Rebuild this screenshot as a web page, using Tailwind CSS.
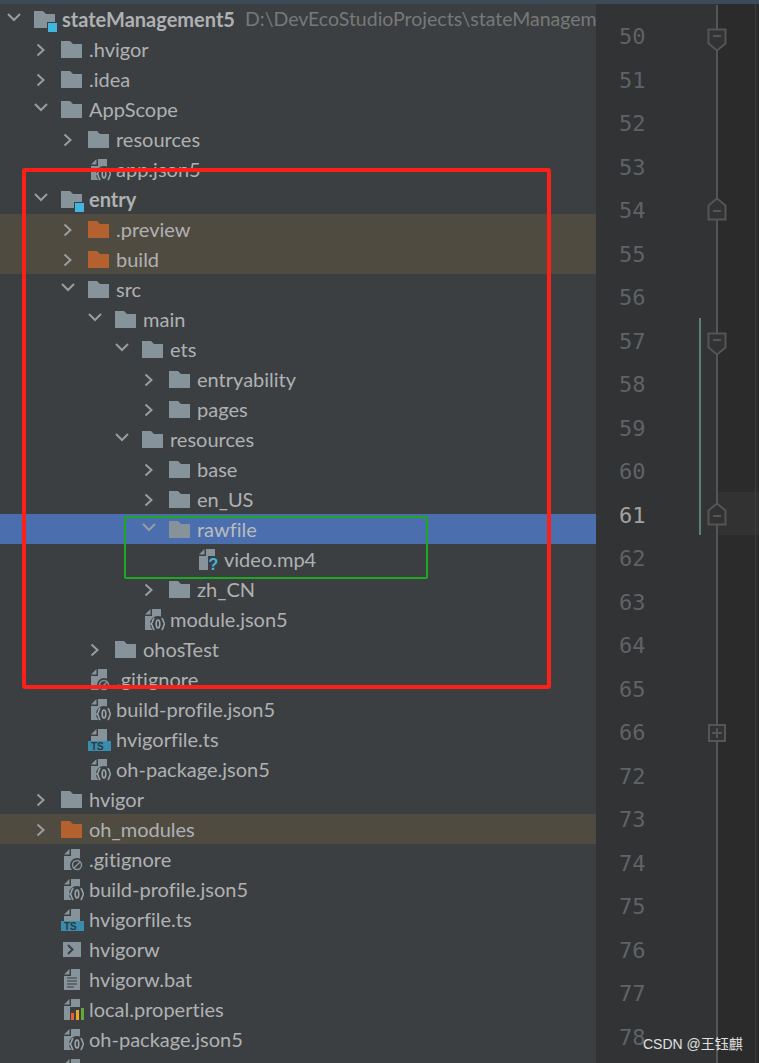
<!DOCTYPE html>
<html lang="en">
<head>
  <meta charset="UTF-8">
  <title>Project tree</title>
  <script src="https://cdn.jsdelivr.net/npm/@tailwindcss/browser@4"></script>
</head>
<body class="bg-[#3c3f41] overflow-hidden">
  <svg class="hidden">
    <symbol id="right" viewBox="0 0 14 14"><path d="M3.500 1.500 9.500 7l-6 5.500" fill="none" stroke="#9a9d9f" stroke-width="2"/></symbol>
    <symbol id="down" viewBox="0 0 14 14"><path d="M1 3l6 6 6-6" fill="none" stroke="#9a9d9f" stroke-width="2"/></symbol>
    <symbol id="folder" viewBox="0 0 22 18"><path d="M0 0h9l3 3h9v14H0z" fill="#87939a"/></symbol>
    <symbol id="folder-o" viewBox="0 0 22 18"><path d="M0 0h9l3 3h9v14H0z" fill="#b4602f"/></symbol>
    <symbol id="module" viewBox="0 0 24 22"><path d="M0 0h9l3 3h9v14H0z" fill="#87939a"/><rect x="13" y="11" width="10" height="10" fill="#3c3f41"/><rect x="14" y="12" width="9" height="9" fill="#40b6e0"/></symbol>
    <symbol id="json" viewBox="0 0 20 22"><path d="M0 5.500 5.500 0v5.500z M7 0h9v21H0V7h7z" fill="#87939a"/><circle cx="13" cy="15" r="8" fill="#3c3f41"/><path d="M9.500 9.500c-2.500 0-1 4.500-3.500 5.500 2.500 1 1 5.500 3.500 5.500M16.500 9.500c2.500 0 1 4.500 3.500 5.500-2.500 1-1 5.500-3.500 5.500" fill="none" stroke="#9aa5ab" stroke-width="1.600"/><ellipse cx="13" cy="15" rx="1.800" ry="4" fill="none" stroke="#9aa5ab" stroke-width="1.600"/></symbol>
    <symbol id="ignore" viewBox="0 0 20 22"><path d="M0 5.500 5.500 0v5.500z M7 0h9v21H0V7h7z" fill="#87939a"/><circle cx="13" cy="16" r="7" fill="#3c3f41"/><circle cx="13" cy="16" r="4.500" fill="none" stroke="#87939a" stroke-width="1.500"/><path d="M10 19l6-6" stroke="#87939a" stroke-width="1.500"/></symbol>
    <symbol id="ts" viewBox="0 0 24 22"><path d="M3 5.500 8.500 0v5.500z M10 0h9v12H3V7h7z" fill="#87939a"/><rect x="0" y="12" width="23" height="10" fill="#3a8cad"/><text x="3" y="20.800" font-family="Liberation Sans" font-size="10" font-weight="700" fill="#2b3a42">TS</text></symbol>
    <symbol id="shell" viewBox="0 0 20 16"><rect width="18" height="15" fill="#87939a"/><path d="M5 3l4.500 4.500L5 12" fill="none" stroke="#3c3f41" stroke-width="2"/></symbol>
    <symbol id="text" viewBox="0 0 20 22"><path d="M0 5.500 5.500 0v5.500z M7 0h9v21H0V7h7z" fill="#87939a"/><path d="M3 9h10M3 12h10M3 15h10M3 18h7" stroke="#3c3f41" stroke-width="1.200"/></symbol>
    <symbol id="props" viewBox="0 0 20 22"><path d="M0 5.500 5.500 0v5.500z M7 0h9v21H0V7h7z" fill="#87939a"/><rect x="6" y="8" width="14" height="14" fill="#3c3f41"/><rect x="7" y="14" width="3" height="7" fill="#e8622c"/><rect x="12" y="11" width="3" height="10" fill="#e9a52d"/><rect x="17" y="9" width="3" height="12" fill="#62a83a"/></symbol>
    <symbol id="unknown" viewBox="0 0 20 22"><path d="M0 5.500 5.500 0v5.500z M7 0h9v21H0V7h7z" fill="#87939a"/><rect x="9" y="7" width="11" height="15" fill="#3c3f41"/><text x="9.500" y="21" font-family="Liberation Sans" font-size="16" font-weight="700" fill="#40b6e0">?</text></symbol>
  </svg>

  <div class="h-[4px] bg-[#3d4a58]"></div>
  <div class="flex h-[1059px] font-['Lato',sans-serif] text-[20px] text-[#afb1b3] [font-variant-ligatures:none]">
    <!-- project tree -->
    <aside class="w-[596px] shrink-0 overflow-hidden whitespace-nowrap [&>div>svg]:translate-y-[1px]">
      <div class="flex items-center h-[30px] pl-[7px]"><svg class="shrink-0 w-[14px] h-[14px] mr-[13px] -mt-[4px]"><use href="#down"/></svg><svg class="shrink-0 w-[24px] h-[22px] mr-[4px] mt-[4px]"><use href="#module"/></svg><b class="font-bold">stateManagement5</b><span class="ml-[10px] text-[19.500px] text-[#787878]">D:\DevEcoStudioProjects\stateManagem</span></div>
      <div class="flex items-center h-[30px] pl-[34px]"><svg class="w-[14px] h-[14px] mr-[13px]"><use href="#right"/></svg><svg class="w-[22px] h-[18px] mr-[6px]"><use href="#folder"/></svg>.hvigor</div>
      <div class="flex items-center h-[30px] pl-[34px]"><svg class="w-[14px] h-[14px] mr-[13px]"><use href="#right"/></svg><svg class="w-[22px] h-[18px] mr-[6px]"><use href="#folder"/></svg>.idea</div>
      <div class="flex items-center h-[30px] pl-[34px]"><svg class="w-[14px] h-[14px] mr-[13px] -mt-[4px]"><use href="#down"/></svg><svg class="w-[22px] h-[18px] mr-[6px]"><use href="#folder"/></svg>AppScope</div>
      <div class="flex items-center h-[30px] pl-[61px]"><svg class="w-[14px] h-[14px] mr-[13px]"><use href="#right"/></svg><svg class="w-[22px] h-[18px] mr-[6px]"><use href="#folder"/></svg>resources</div>
      <div class="flex items-center h-[30px] pl-[91px]"><svg class="w-[20px] h-[22px] mr-[5px]"><use href="#json"/></svg>app.json5</div>
      <div class="flex items-center h-[30px] pl-[34px]"><svg class="w-[14px] h-[14px] mr-[13px] -mt-[4px]"><use href="#down"/></svg><svg class="w-[24px] h-[22px] mr-[4px] mt-[4px]"><use href="#module"/></svg><b class="font-bold">entry</b></div>
      <div class="flex items-center h-[30px] pl-[61px] bg-[#4f4b41]"><svg class="w-[14px] h-[14px] mr-[13px]"><use href="#right"/></svg><svg class="w-[22px] h-[18px] mr-[6px]"><use href="#folder-o"/></svg>.preview</div>
      <div class="flex items-center h-[30px] pl-[61px] bg-[#4f4b41]"><svg class="w-[14px] h-[14px] mr-[13px]"><use href="#right"/></svg><svg class="w-[22px] h-[18px] mr-[6px]"><use href="#folder-o"/></svg>build</div>
      <div class="flex items-center h-[30px] pl-[61px]"><svg class="w-[14px] h-[14px] mr-[13px] -mt-[4px]"><use href="#down"/></svg><svg class="w-[22px] h-[18px] mr-[6px]"><use href="#folder"/></svg>src</div>
      <div class="flex items-center h-[30px] pl-[88px]"><svg class="w-[14px] h-[14px] mr-[13px] -mt-[4px]"><use href="#down"/></svg><svg class="w-[22px] h-[18px] mr-[6px]"><use href="#folder"/></svg>main</div>
      <div class="flex items-center h-[30px] pl-[115px]"><svg class="w-[14px] h-[14px] mr-[13px] -mt-[4px]"><use href="#down"/></svg><svg class="w-[22px] h-[18px] mr-[6px]"><use href="#folder"/></svg>ets</div>
      <div class="flex items-center h-[30px] pl-[142px]"><svg class="w-[14px] h-[14px] mr-[13px]"><use href="#right"/></svg><svg class="w-[22px] h-[18px] mr-[6px]"><use href="#folder"/></svg>entryability</div>
      <div class="flex items-center h-[30px] pl-[142px]"><svg class="w-[14px] h-[14px] mr-[13px]"><use href="#right"/></svg><svg class="w-[22px] h-[18px] mr-[6px]"><use href="#folder"/></svg>pages</div>
      <div class="flex items-center h-[30px] pl-[115px]"><svg class="w-[14px] h-[14px] mr-[13px] -mt-[4px]"><use href="#down"/></svg><svg class="w-[22px] h-[18px] mr-[6px]"><use href="#folder"/></svg>resources</div>
      <div class="flex items-center h-[30px] pl-[142px]"><svg class="w-[14px] h-[14px] mr-[13px]"><use href="#right"/></svg><svg class="w-[22px] h-[18px] mr-[6px]"><use href="#folder"/></svg>base</div>
      <div class="flex items-center h-[30px] pl-[142px]"><svg class="w-[14px] h-[14px] mr-[13px]"><use href="#right"/></svg><svg class="w-[22px] h-[18px] mr-[6px]"><use href="#folder"/></svg>en_US</div>
      <div class="flex items-center h-[30px] pl-[142px] bg-[#4b6eaf] text-[#bbbbbb]"><svg class="w-[14px] h-[14px] mr-[13px] -mt-[4px]"><use href="#down"/></svg><svg class="w-[22px] h-[18px] mr-[6px]"><use href="#folder"/></svg>rawfile</div>
      <div class="flex items-center h-[30px] pl-[199px]"><svg class="w-[20px] h-[22px] mr-[5px]"><use href="#unknown"/></svg>video.mp4</div>
      <div class="flex items-center h-[30px] pl-[142px]"><svg class="w-[14px] h-[14px] mr-[13px]"><use href="#right"/></svg><svg class="w-[22px] h-[18px] mr-[6px]"><use href="#folder"/></svg>zh_CN</div>
      <div class="flex items-center h-[30px] pl-[145px]"><svg class="w-[20px] h-[22px] mr-[5px]"><use href="#json"/></svg>module.json5</div>
      <div class="flex items-center h-[30px] pl-[88px]"><svg class="w-[14px] h-[14px] mr-[13px]"><use href="#right"/></svg><svg class="w-[22px] h-[18px] mr-[6px]"><use href="#folder"/></svg>ohosTest</div>
      <div class="flex items-center h-[30px] pl-[91px]"><svg class="w-[20px] h-[22px] mr-[5px]"><use href="#ignore"/></svg>.gitignore</div>
      <div class="flex items-center h-[30px] pl-[91px]"><svg class="w-[20px] h-[22px] mr-[5px]"><use href="#json"/></svg>build-profile.json5</div>
      <div class="flex items-center h-[30px] pl-[88px]"><svg class="w-[24px] h-[22px] mr-[4px]"><use href="#ts"/></svg>hvigorfile.ts</div>
      <div class="flex items-center h-[30px] pl-[91px]"><svg class="w-[20px] h-[22px] mr-[5px]"><use href="#json"/></svg>oh-package.json5</div>
      <div class="flex items-center h-[30px] pl-[34px]"><svg class="w-[14px] h-[14px] mr-[13px]"><use href="#right"/></svg><svg class="w-[22px] h-[18px] mr-[6px]"><use href="#folder"/></svg>hvigor</div>
      <div class="flex items-center h-[30px] pl-[34px] bg-[#4f4b41]"><svg class="w-[14px] h-[14px] mr-[13px]"><use href="#right"/></svg><svg class="w-[22px] h-[18px] mr-[6px]"><use href="#folder-o"/></svg>oh_modules</div>
      <div class="flex items-center h-[30px] pl-[64px]"><svg class="w-[20px] h-[22px] mr-[5px]"><use href="#ignore"/></svg>.gitignore</div>
      <div class="flex items-center h-[30px] pl-[64px]"><svg class="w-[20px] h-[22px] mr-[5px]"><use href="#json"/></svg>build-profile.json5</div>
      <div class="flex items-center h-[30px] pl-[61px]"><svg class="w-[24px] h-[22px] mr-[4px]"><use href="#ts"/></svg>hvigorfile.ts</div>
      <div class="flex items-center h-[30px] pl-[63px]"><svg class="w-[20px] h-[16px] mr-[6px]"><use href="#shell"/></svg>hvigorw</div>
      <div class="flex items-center h-[30px] pl-[64px]"><svg class="w-[20px] h-[22px] mr-[5px]"><use href="#text"/></svg>hvigorw.bat</div>
      <div class="flex items-center h-[30px] pl-[64px]"><svg class="w-[20px] h-[22px] mr-[5px]"><use href="#props"/></svg>local.properties</div>
      <div class="flex items-center h-[30px] pl-[64px]"><svg class="w-[20px] h-[22px] mr-[5px]"><use href="#json"/></svg>oh-package.json5</div>
      <div class="flex items-center h-[30px] pl-[64px]"><svg class="w-[20px] h-[22px] mr-[5px]"><use href="#json"/></svg></div>
    </aside>

    <!-- line numbers -->
    <div class="relative w-[121px] shrink-0 bg-[#313335] pt-[11px] pl-[23px] font-['DejaVu_Sans_Mono',monospace] text-[22px] text-[#606366]">
      <div class="h-[43.5px] leading-[43.5px]">50</div>
      <div class="h-[43.5px] leading-[43.5px]">51</div>
      <div class="h-[43.5px] leading-[43.5px]">52</div>
      <div class="h-[43.5px] leading-[43.5px]">53</div>
      <div class="h-[43.5px] leading-[43.5px]">54</div>
      <div class="h-[43.5px] leading-[43.5px]">55</div>
      <div class="h-[43.5px] leading-[43.5px]">56</div>
      <div class="h-[43.5px] leading-[43.5px]">57</div>
      <div class="h-[43.5px] leading-[43.5px]">58</div>
      <div class="h-[43.5px] leading-[43.5px]">59</div>
      <div class="h-[43.5px] leading-[43.5px]">60</div>
      <div class="h-[43.5px] leading-[43.5px] text-[#a4a3a3]">61</div>
      <div class="h-[43.5px] leading-[43.5px]">62</div>
      <div class="h-[43.5px] leading-[43.5px]">63</div>
      <div class="h-[43.5px] leading-[43.5px]">64</div>
      <div class="h-[43.5px] leading-[43.5px]">65</div>
      <div class="h-[43.5px] leading-[43.5px]">66</div>
      <div class="h-[43.5px] leading-[43.5px]">72</div>
      <div class="h-[43.5px] leading-[43.5px]">73</div>
      <div class="h-[43.5px] leading-[43.5px]">74</div>
      <div class="h-[43.5px] leading-[43.5px]">75</div>
      <div class="h-[43.5px] leading-[43.5px]">76</div>
      <div class="h-[43.5px] leading-[43.5px]">77</div>
      <div class="h-[43.5px] leading-[43.5px]">78</div>
      <!-- changed-lines marker -->
      <div class="absolute left-[103px] top-[314px] w-[2px] h-[217px] bg-[#5e7f78]"></div>
    </div>

    <!-- code area -->
    <div class="relative flex-1 bg-[#2b2b2b]">
      <div class="absolute left-0 right-0 top-[488px] h-[43px] bg-[#323232]"></div>
      <div class="absolute left-[38px] top-0 bottom-0 w-[1px] bg-[#3d3d3d]"></div>
    </div>
  </div>

  <!-- fold guide and markers -->
  <div class="absolute left-[716px] top-[5px] bottom-0 w-[2px] bg-[#555555]"></div>
  <svg class="absolute left-[707px] top-[28px] w-[20px] h-[24px]" viewBox="0 0 20 24"><path d="M1.500 1.500h17v14l-8.500 7-8.500-7z" fill="#313335" stroke="#555555" stroke-width="2"/><path d="M6 8h8" stroke="#555555" stroke-width="2"/></svg>
  <svg class="absolute left-[707px] top-[197px] w-[20px] h-[24px]" viewBox="0 0 20 24"><path d="M1.500 22.500h17v-14l-8.500-7-8.500 7z" fill="#313335" stroke="#555555" stroke-width="2"/><path d="M6 14h8" stroke="#555555" stroke-width="2"/></svg>
  <svg class="absolute left-[707px] top-[332px] w-[20px] h-[24px]" viewBox="0 0 20 24"><path d="M1.500 1.500h17v14l-8.500 7-8.500-7z" fill="#313335" stroke="#555555" stroke-width="2"/><path d="M6 8h8" stroke="#555555" stroke-width="2"/></svg>
  <svg class="absolute left-[707px] top-[502px] w-[20px] h-[24px]" viewBox="0 0 20 24"><path d="M1.500 22.500h17v-14l-8.500-7-8.500 7z" fill="#323232" stroke="#555555" stroke-width="2"/><path d="M6 14h8" stroke="#555555" stroke-width="2"/></svg>
  <svg class="absolute left-[707px] top-[723px] w-[20px] h-[20px]" viewBox="0 0 20 20"><rect x="2" y="2" width="16" height="16" fill="#313335" stroke="#555555" stroke-width="2"/><path d="M5 10h10M10 5v10" stroke="#555555" stroke-width="2"/></svg>

  <!-- annotations drawn over the screenshot -->
  <div class="absolute left-[22px] top-[168px] w-[529px] h-[521px] border-4 border-[#fb2118] rounded-[3px]"></div>
  <div class="absolute left-[124px] top-[516px] w-[304px] h-[63px] border-2 border-[#1ca81f] rounded-[2px]"></div>

  <div class="absolute left-[643px] top-[1034px] font-['Liberation_Sans','Noto_Sans_CJK_SC',sans-serif] text-[14px] leading-[20px] text-white/85">CSDN @王钰麒</div>
</body>
</html>
